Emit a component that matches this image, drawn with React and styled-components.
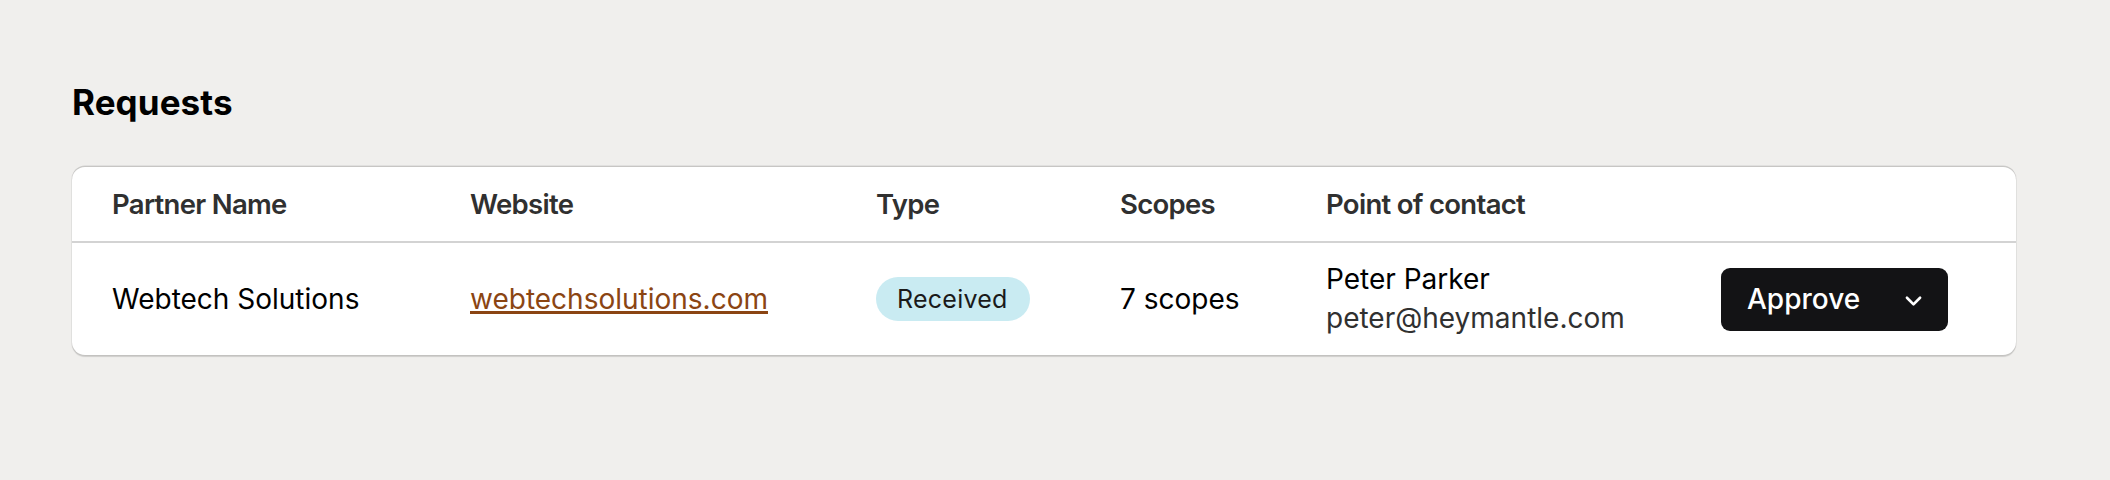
import React from "react";
import styled, { createGlobalStyle } from "styled-components";

const GlobalStyle = createGlobalStyle`
  html, body {
    margin: 0;
    padding: 0;
    background: #f0efed;
  }
  body {
    font-family: Inter, "Noto Sans", "Liberation Sans", sans-serif;
    -webkit-font-smoothing: antialiased;
  }
`;

const Page = styled.main`
  box-sizing: border-box;
  width: 2110px;
  min-height: 480px;
  padding: 81px 94px 0 72px;
  display: flex;
  flex-direction: column;
  gap: 44px;
  background: #f0efed;
`;

const Title = styled.h1`
  margin: 0;
  font-size: 35px;
  line-height: 42px;
  font-weight: 700;
  color: #000;
  letter-spacing: 0.1px;
`;

const Card = styled.section`
  background: #fff;
  border-radius: 13px;
  overflow: hidden;
  box-shadow: 0 -1.5px 0 rgba(0, 0, 0, 0.12), 0 0 0 1px rgba(0, 0, 0, 0.05),
    0 2px 1px rgba(0, 0, 0, 0.14);
`;

const Row = styled.div`
  display: grid;
  grid-template-columns: 358px 406px 244px 206px 395px auto;
  align-items: center;
  padding: 0 40px 0 40px;
  height: ${(p) => (p.$head ? "74px" : "112px")};
  border-bottom: ${(p) => (p.$head ? "2px solid #d3d3d3" : "none")};
`;

const HeadCell = styled.div`
  font-size: 27.5px;
  line-height: 34px;
  font-weight: 600;
  letter-spacing: -0.7px;
  color: #303030;
`;

const Cell = styled.div`
  font-size: 28px;
  line-height: 34px;
  font-weight: 400;
  color: #000;
`;

const Link = styled.a`
  color: #8b4513;
  text-decoration: underline;
  text-decoration-thickness: 2.5px;
  text-underline-offset: 1.5px;
  cursor: pointer;
`;

const Badge = styled.span`
  display: inline-flex;
  align-items: center;
  height: 44px;
  padding: 0 22px 0 21px;
  border-radius: 22px;
  background: #c9ebf2;
  color: #1a1a1a;
  font-size: 25px;
  font-weight: 400;
  letter-spacing: 0.25px;
`;

const Contact = styled.div`
  display: flex;
  flex-direction: column;
  font-size: 28px;
  line-height: 39px;
`;

const ContactName = styled.span`
  color: #000;
`;

const ContactEmail = styled.span`
  color: #303030;
`;

const ActionButton = styled.button`
  box-sizing: border-box;
  width: 227px;
  height: 63px;
  display: flex;
  align-items: center;
  justify-content: space-between;
  padding: 0 17px 0 26px;
  border: none;
  border-radius: 9px;
  background: #131315;
  color: #fff;
  font-family: inherit;
  font-size: 28px;
  font-weight: 450;
  cursor: pointer;
`;

const Chevron = () => (
  <svg width="35" height="35" viewBox="0 0 20 20" fill="#fff" aria-hidden="true">
    <path d="M5.72 8.47a.75.75 0 0 1 1.06 0l3.22 3.22 3.22-3.22a.75.75 0 1 1 1.06 1.06l-3.75 3.75a.75.75 0 0 1-1.06 0l-3.75-3.75a.75.75 0 0 1 0-1.06Z" />
  </svg>
);

const columns = ["Partner Name", "Website", "Type", "Scopes", "Point of contact", ""];

export default function App() {
  return (
    <>
      <GlobalStyle />
      <Page>
        <Title>Requests</Title>
        <Card>
          <Row $head>
            {columns.map((c, i) => (
              <HeadCell key={i}>{c}</HeadCell>
            ))}
          </Row>
          <Row>
            <Cell>Webtech Solutions</Cell>
            <Cell>
              <Link>webtechsolutions.com</Link>
            </Cell>
            <Cell>
              <Badge>Received</Badge>
            </Cell>
            <Cell>7 scopes</Cell>
            <Contact>
              <ContactName>Peter Parker</ContactName>
              <ContactEmail>peter@heymantle.com</ContactEmail>
            </Contact>
            <div>
              <ActionButton>
                <span>Approve</span>
                <Chevron />
              </ActionButton>
            </div>
          </Row>
        </Card>
      </Page>
    </>
  );
}
